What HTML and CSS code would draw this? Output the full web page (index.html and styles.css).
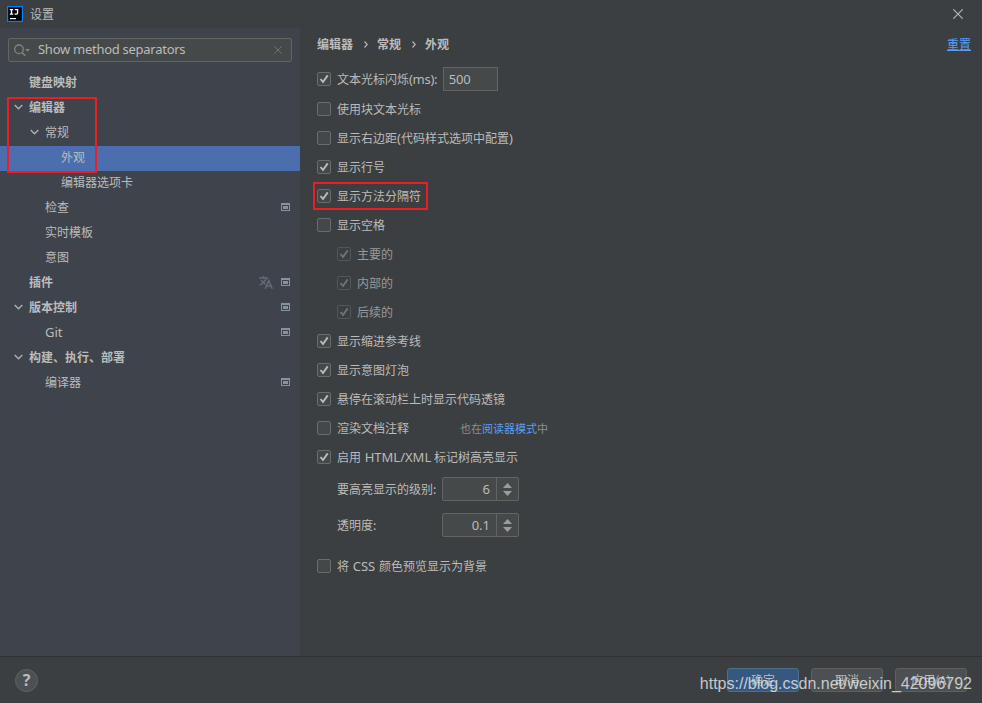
FILE: index.html
```html
<!DOCTYPE html>
<html lang="zh-CN">
<head>
    <meta charset="UTF-8">
    <title>设置</title>
    <link rel="stylesheet" href="styles.css">
</head>
<body>
    <svg class="defs" width="0" height="0">
        <symbol id="chevron" viewBox="0 0 10 6"><path d="M0.8 0.8 L5 5 L9.2 0.8" fill="none" stroke="#adb0b3" stroke-width="1.5"/></symbol>
        <symbol id="project" viewBox="0 0 9 8"><path fill="#87939a" fill-rule="evenodd" d="M0 0H9V8H0ZM1 2V7H8V2ZM2 3H7V6H2Z"/></symbol>
        <symbol id="check" viewBox="0 0 12 12"><path d="M2.5 6 L5 9 L9.7 2.4" fill="none" stroke="currentColor" stroke-width="1.9"/></symbol>
        <symbol id="arrows" viewBox="0 0 9 13"><path d="M0 5 L4.5 0 L9 5ZM0 8 L4.5 13 L9 8Z" fill="#9a9da0"/></symbol>
    </svg>

    <header class="titlebar">
        <svg class="logo" width="16" height="16" viewBox="0 0 16 16">
            <rect width="16" height="16" fill="#087cfa"/>
            <rect x="1.2" y="1.2" width="13.6" height="13.6" fill="#000"/>
            <path d="M2.8 3.6H6.2M4.5 3.5V8M2.8 8.1H6.2M7.8 3.6H10.6V6.8Q10.6 8.1 9.2 8.1H7.6" fill="none" stroke="#fff" stroke-width="1.4"/>
            <rect x="3" y="12" width="6" height="1.2" fill="#fff"/>
        </svg>
        <span class="title">设置</span>
        <svg class="close" width="10" height="10" viewBox="0 0 10 10"><path d="M0.3 0.3L9.7 9.7M9.7 0.3L0.3 9.7" stroke="#b4b6b7" stroke-width="1.1"/></svg>
    </header>

    <main>
        <aside class="sidebar">
            <div class="search">
                <svg width="17" height="13" viewBox="0 0 17 13">
                    <circle cx="5" cy="5.3" r="4.3" fill="none" stroke="#7e8486" stroke-width="1.3"/>
                    <path d="M8 8.5L11.3 11.8" stroke="#7e8486" stroke-width="1.6"/>
                    <path d="M11 5H16L13.5 7.8Z" fill="#7e8486"/>
                </svg>
                <span class="query">Show method separators</span>
                <svg width="8" height="8" viewBox="0 0 8 8"><path d="M0.3 0.3L7.7 7.7M7.7 0.3L0.3 7.7" stroke="#6d7173"/></svg>
            </div>

            <ul class="tree">
                <li class="bold"><i></i><span>键盘映射</span></li>
                <li class="bold"><svg class="chev"><use href="#chevron"/></svg><span>编辑器</span></li>
                <li class="level-1"><svg class="chev"><use href="#chevron"/></svg><span>常规</span></li>
                <li class="level-2 selected"><i></i><span>外观</span></li>
                <li class="level-2"><i></i><span>编辑器选项卡</span></li>
                <li class="level-1"><i></i><span>检查</span><svg class="proj"><use href="#project"/></svg></li>
                <li class="level-1"><i></i><span>实时模板</span></li>
                <li class="level-1"><i></i><span>意图</span></li>
                <li class="bold"><i></i><span>插件</span>
                    <svg class="lang" width="14" height="13" viewBox="0 0 14 13"><path d="M0 2H9M4.5 0V2M7.3 2Q6 6.5 0.8 9M2.2 4Q4 7 6.5 8.3M6.2 12.8L9.7 4.6L13.3 12.8M7.5 10H12" fill="none" stroke="#646b74" stroke-width="1.5"/></svg>
                    <svg class="proj"><use href="#project"/></svg></li>
                <li class="bold"><svg class="chev"><use href="#chevron"/></svg><span>版本控制</span><svg class="proj"><use href="#project"/></svg></li>
                <li class="level-1"><i></i><span class="latin">Git</span><svg class="proj"><use href="#project"/></svg></li>
                <li class="bold"><svg class="chev"><use href="#chevron"/></svg><span>构建、执行、部署</span></li>
                <li class="level-1"><i></i><span>编译器</span><svg class="proj"><use href="#project"/></svg></li>
            </ul>
            <div class="mark mark-tree"></div>
        </aside>

        <section class="content">
            <div class="breadcrumb">
                <span>编辑器</span>
                <svg width="4" height="7" viewBox="0 0 4 7"><path d="M0.5 0.5L3.3 3.5L0.5 6.5" fill="none" stroke="#bbb" stroke-width="1.1"/></svg>
                <span>常规</span>
                <svg width="4" height="7" viewBox="0 0 4 7"><path d="M0.5 0.5L3.3 3.5L0.5 6.5" fill="none" stroke="#bbb" stroke-width="1.1"/></svg>
                <span>外观</span>
                <a class="reset">重置</a>
            </div>

            <div class="row first"><svg class="box"><use href="#check"/></svg><span>文本光标闪烁<b class="latin ms">(ms):</b></span><div class="field">500</div></div>
            <div class="row"><svg class="box"></svg><span>使用块文本光标</span></div>
            <div class="row"><svg class="box"></svg><span>显示右边距<b class="latin">(</b>代码样式选项中配置<b class="latin">)</b></span></div>
            <div class="row"><svg class="box"><use href="#check"/></svg><span>显示行号</span></div>
            <div class="row marked"><svg class="box"><use href="#check"/></svg><span>显示方法分隔符</span><div class="mark mark-row"></div></div>
            <div class="row"><svg class="box"></svg><span>显示空格</span></div>
            <div class="row disabled"><svg class="box"><use href="#check"/></svg><span>主要的</span></div>
            <div class="row disabled"><svg class="box"><use href="#check"/></svg><span>内部的</span></div>
            <div class="row disabled"><svg class="box"><use href="#check"/></svg><span>后续的</span></div>
            <div class="row"><svg class="box"><use href="#check"/></svg><span>显示缩进参考线</span></div>
            <div class="row"><svg class="box"><use href="#check"/></svg><span>显示意图灯泡</span></div>
            <div class="row"><svg class="box"><use href="#check"/></svg><span>悬停在滚动栏上时显示代码透镜</span></div>
            <div class="row"><svg class="box"></svg><span>渲染文档注释</span><span class="hint">也在<a>阅读器模式</a>中</span></div>
            <div class="row"><svg class="box"><use href="#check"/></svg><span>启用 <b class="latin html">HTML/XML</b> 标记树高亮显示</span></div>

            <div class="spin-row">
                <label>要高亮显示的级别:</label>
                <div class="spinner"><span>6</span><svg width="9" height="13"><use href="#arrows"/></svg></div>
            </div>
            <div class="spin-row">
                <label>透明度:</label>
                <div class="spinner"><span>0.1</span><svg width="9" height="13"><use href="#arrows"/></svg></div>
            </div>

            <div class="row last"><svg class="box"></svg><span>将 <b class="latin css">CSS</b> 颜色预览显示为背景</span></div>
        </section>
    </main>

    <footer>
        <div class="help">?</div>
        <div class="buttons">
            <div class="btn primary">确定</div>
            <div class="btn">取消</div>
            <div class="btn">应用(A)</div>
        </div>
        <div class="watermark">https://blog.csdn.net/weixin_42096792</div>
    </footer>
</body>
</html>
```

FILE: styles.css
```css
* { box-sizing: border-box; }
body {
    margin: 0;
    width: 982px;
    height: 703px;
    display: flex;
    flex-direction: column;
    overflow: hidden;
    background: #3c3f41;
    color: #bbbbbb;
    font-family: "Noto Sans CJK SC", sans-serif;
    font-size: 12px;
    line-height: 18px;
    white-space: nowrap;
}
svg { display: block; flex: none; }
.defs { position: absolute; }
.latin { font-family: "Noto Sans", sans-serif; font-size: 13px; font-weight: normal; line-height: 1; }

/* title bar */
.titlebar { height: 28px; flex: none; display: flex; align-items: center; padding: 0 19px 0 7px; }
.title { margin-left: 7px; }
.close { margin-left: auto; }

main { flex: 1; display: flex; min-height: 0; }

/* sidebar */
.sidebar { position: relative; width: 300px; background: #3f434c; padding-top: 10px; }
.search {
    height: 24px;
    margin: 0 8px 9px;
    padding: 0 9px 0 5px;
    display: flex;
    align-items: center;
    background: #45494a;
    border: 1px solid #646464;
    border-radius: 2px;
}
.query { flex: 1; margin-left: 7px; padding-bottom: 2px; font-family: "Noto Sans", sans-serif; font-size: 13px; letter-spacing: -0.27px; }
.tree { list-style: none; margin: 0; padding: 0; }
.tree li { height: 25px; display: flex; align-items: center; padding: 0 10px 3px 14px; }
.tree li.level-1 { padding-left: 30px; }
.tree li.level-2 { padding-left: 46px; }
.tree li.selected { background: #4b6eaf; }
.tree li span { margin-right: auto; }
.tree i, .chev { width: 9px; height: 6px; margin-right: 6px; }
.bold, .breadcrumb { font-weight: bold; }
.proj { width: 9px; height: 8px; }
.lang { margin-right: 8px; }

/* red highlight frames */
.mark { position: absolute; border: 2px solid #ee1c25; }
.mark-tree { left: 7px; top: 69px; width: 90px; height: 76px; }
.mark-row { left: -4px; top: 0; width: 115px; height: 28px; }

/* content */
.content { flex: 1; padding: 7px 11px 0 17px; }
.breadcrumb { height: 18px; display: flex; align-items: center; margin-bottom: 12px; }
.breadcrumb svg { margin: 0 9px 0 11px; }
.breadcrumb .reset { margin-left: auto; font-weight: normal; color: #589df6; text-decoration: underline; }
.row { height: 28px; margin-bottom: 1px; display: flex; align-items: center; }
.row.first { margin-bottom: 2px; }
.row.marked { position: relative; }
.row.disabled { padding-left: 20px; color: #999; }
.row.last { margin-top: 8px; }
.ms { letter-spacing: -0.3px; }
.html { margin: 0 0 0 1px; }
.css { margin: 0 1px; }
.box {
    width: 14px;
    height: 14px;
    margin-right: 6px;
    background: #43494a;
    border: 1px solid #6b6b6b;
    border-radius: 2px;
}
.disabled .box { color: #6f7273; background: #3c3f41; border-color: #545556; }
.field {
    width: 55px;
    height: 24px;
    margin-left: 5.5px;
    padding-left: 5px;
    background: #45494a;
    border: 1px solid #646464;
    font: 13px/22px "Noto Sans", sans-serif;
    letter-spacing: -0.2px;
}
.hint { margin-left: 51px; font-size: 11px; color: #8c8c8c; }
.hint a { color: #589df6; }
.spin-row { height: 36px; display: flex; align-items: flex-start; padding: 5px 0 0 20px; }
.spin-row label { width: 105px; line-height: 23px; }
.spinner {
    width: 77px;
    height: 24px;
    display: flex;
    align-items: center;
    background: #45494a;
    border: 1px solid #646464;
    border-radius: 2px;
}
.spinner span {
    width: 54px;
    height: 22px;
    padding-right: 6px;
    border-right: 1px solid #646464;
    text-align: right;
    font: 13px/23px "Noto Sans", sans-serif;
}
.spinner svg { margin-left: 6px; }

/* footer */
footer {
    position: relative;
    height: 47px;
    flex: none;
    display: flex;
    justify-content: space-between;
    align-items: flex-start;
    padding: 11px 15px 0;
    border-top: 1px solid #323232;
}
.help {
    width: 23px;
    height: 23px;
    margin-top: 1px;
    border: 1px solid #606365;
    border-radius: 50%;
    background: #4c5052;
    text-align: center;
    font: bold 16px/21px "Noto Sans", sans-serif;
}
.buttons { display: flex; gap: 12px; }
.btn {
    width: 72px;
    height: 24px;
    border: 1px solid #5e6060;
    border-radius: 3px;
    background: #4c5052;
    text-align: center;
    line-height: 22px;
}
.btn.primary { background: #365880; border-color: #4c708c; }
.watermark {
    position: absolute;
    right: 10px;
    top: 18px;
    color: rgba(225, 225, 225, 0.85);
    font: 16px/18px "Liberation Sans", sans-serif;
}
```
